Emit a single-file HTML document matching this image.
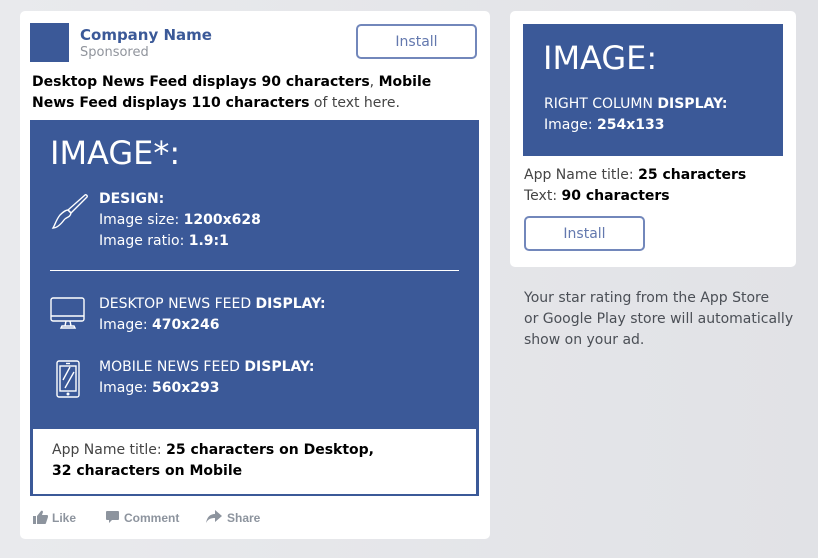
<!DOCTYPE html>
<html><head><style>
*{margin:0;padding:0;box-sizing:border-box}
body{width:818px;height:558px;background:linear-gradient(90deg,#e9eaed,#e1e2e6);font-family:"DejaVu Sans","Liberation Sans",sans-serif;position:relative;overflow:hidden;color:#000}
.a{position:absolute}
.card{background:#fff;border-radius:5px}
.blue{background:#3b5998;color:#fff}
.lt{color:#444}
b{font-weight:bold}
.btn{border:2px solid #7287bb;border-radius:5px;color:#6378ae;font-size:14px;text-align:center;background:#fff}
.w{color:#fff;font-size:14px;line-height:21px}
.act{font-family:"Liberation Sans",sans-serif;font-weight:bold;font-size:12px;color:#8d949e}
</style></head><body>
<div class="a card" style="left:20px;top:11px;width:470px;height:528px"></div>
<div class="a blue" style="left:30px;top:23px;width:39px;height:39px"></div>
<div class="a" style="left:80px;top:26px;font-size:15px;color:#3b5998;font-weight:bold">Company Name</div>
<div class="a" style="left:80px;top:45px;font-size:13px;color:#90949c">Sponsored</div>
<div class="a btn" style="left:356px;top:24px;width:121px;height:35px;line-height:33px">Install</div>
<div class="a" style="left:32px;top:72px;font-size:14px;line-height:21px;width:440px"><b>Desktop News Feed displays 90 characters</b><span class="lt">,</span> <b>Mobile News Feed displays 110 characters</b> <span class="lt">of text here.</span></div>
<div class="a blue" style="left:30px;top:120px;width:449px;height:376px"></div>
<div class="a" style="left:50px;top:134px;font-size:32px;color:#fff">IMAGE*:</div>
<svg class="a" style="left:51px;top:193px" width="38" height="36" viewBox="0 0 38 36" fill="none" stroke="#fff" stroke-width="1.4"><path d="M34 2 C35 1 37 3 36 4 L20 20 L17 17 Z"/><path d="M17 17 L20 20 C19 25 15 24 13 27 C10 31 6 35 2 35 C4 32 5 27 9 22 C11 20 14 17 17 17Z"/></svg>
<div class="a w" style="left:99px;top:189px"><b>DESIGN:</b><br>Image size: <b>1200x628</b><br>Image ratio: <b>1.9:1</b></div>
<div class="a" style="left:50px;top:270px;width:409px;height:1px;background:#fff"></div>
<svg class="a" style="left:50px;top:297px" width="36" height="33" viewBox="0 0 36 33" fill="none" stroke="#fff" stroke-width="1.4"><rect x="1" y="1" width="33" height="23" rx="2"/><line x1="1" y1="19" x2="34" y2="19"/><path d="M16 24 L15 29 M20 24 L21 29 M11 31 L25 31 L24 29 L12 29Z"/></svg>
<div class="a w" style="left:99px;top:294px">DESKTOP NEWS FEED <b>DISPLAY:</b><br>Image: <b>470x246</b></div>
<svg class="a" style="left:56px;top:360px" width="24" height="38" viewBox="0 0 24 38" fill="none" stroke="#fff" stroke-width="1.4"><rect x="1" y="1" width="22" height="36" rx="2"/><rect x="4" y="6" width="16" height="25"/><path d="M7 20 L14 7 M9 28 L18 12"/><line x1="10" y1="3.5" x2="14" y2="3.5"/><circle cx="12" cy="34" r="0.8"/></svg>
<div class="a w" style="left:99px;top:357px">MOBILE NEWS FEED <b>DISPLAY:</b><br>Image: <b>560x293</b></div>
<div class="a" style="left:33px;top:429px;width:443px;height:65px;background:#fff"></div>
<div class="a" style="left:52px;top:440px;font-size:14px;line-height:21px"><span class="lt">App Name title:</span> <b>25 characters on Desktop,<br>32 characters on Mobile</b></div>
<svg class="a" style="left:33px;top:510px" width="15" height="14" viewBox="0 0 15 14" fill="#8d949e"><rect x="0" y="6" width="3" height="8"/><path d="M4 6 L8 1 C9 0 10 1 10 2 L9 5 L14 5 C15 5 15 6 15 7 L13 13 C13 14 12 14 11 14 L4 14Z"/></svg>
<div class="a act" style="left:52px;top:511px">Like</div>
<svg class="a" style="left:106px;top:511px" width="13" height="13" viewBox="0 0 13 13" fill="#8d949e"><path d="M0 1 Q0 0 1 0 L12 0 Q13 0 13 1 L13 8 Q13 9 12 9 L6 9 L3 12 L3 9 L1 9 Q0 9 0 8Z"/></svg>
<div class="a act" style="left:124px;top:511px">Comment</div>
<svg class="a" style="left:206px;top:510px" width="16" height="14" viewBox="0 0 16 14" fill="#8d949e"><path d="M9 0 L16 6 L9 12 L9 8 C5 8 2 9 0 13 C1 7 4 4 9 4Z"/></svg>
<div class="a act" style="left:227px;top:511px">Share</div>

<div class="a card" style="left:510px;top:11px;width:286px;height:256px"></div>
<div class="a blue" style="left:523px;top:24px;width:260px;height:132px"></div>
<div class="a" style="left:543px;top:39px;font-size:32px;color:#fff">IMAGE:</div>
<div class="a w" style="left:544px;top:94px">RIGHT COLUMN <b>DISPLAY:</b><br>Image: <b>254x133</b></div>
<div class="a" style="left:524px;top:165px;font-size:14px;line-height:21px"><span class="lt">App Name title:</span> <b>25 characters</b><br><span class="lt">Text:</span> <b>90 characters</b></div>
<div class="a btn" style="left:524px;top:216px;width:121px;height:35px;line-height:33px">Install</div>
<div class="a" style="left:524px;top:288px;font-size:14px;line-height:21px;color:#4b4f56">Your star rating from the App Store<br>or Google Play store will automatically<br>show on your ad.</div>
</body></html>
